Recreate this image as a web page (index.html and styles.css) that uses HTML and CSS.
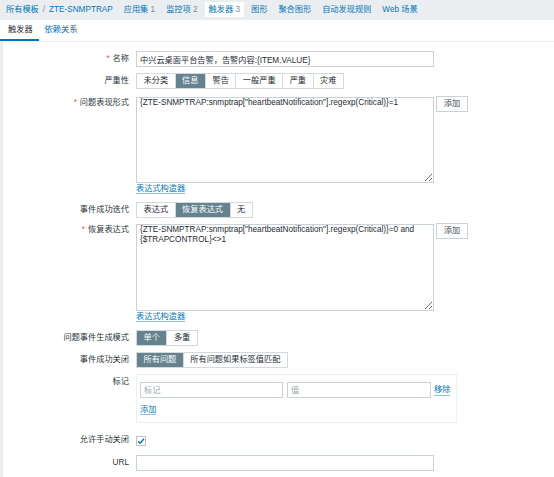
FILE: index.html
```html
<!DOCTYPE html>
<html lang="zh-CN">
<head>
  <meta charset="UTF-8" />
  <meta name="viewport" content="width=device-width, initial-scale=1.0"/>
  <title>触发器</title>
  <link rel="stylesheet" href="styles.css">
</head>
<body>

  <!-- Host navigation -->
  <ul class="host-nav">
    <li><a href="#">所有模板</a><span class="sep">/</span><a href="#">ZTE-SNMPTRAP</a></li>
    <li><a href="#">应用集</a> <span class="count">1</span></li>
    <li><a href="#">监控项</a> <span class="count">2</span></li>
    <li class="selected"><a href="#">触发器</a> <span class="count">3</span></li>
    <li><a href="#">图形</a></li>
    <li><a href="#">聚合图形</a></li>
    <li><a href="#">自动发现规则</a></li>
    <li><a href="#">Web 场景</a></li>
  </ul>

  <!-- Tabs -->
  <ul class="tabs">
    <li class="active">触发器</li>
    <li><a href="#">依赖关系</a></li>
  </ul>

  <div class="tab-body">

    <div class="row">
      <label class="req">名称</label>
      <input class="field" type="text" value="中兴云桌面平台告警，告警内容:{ITEM.VALUE}" />
    </div>

    <div class="row sev">
      <label>严重性</label>
      <div class="seg">
        <span>未分类</span>
        <span class="on">信息</span>
        <span>警告</span>
        <span>一般严重</span>
        <span>严重</span>
        <span>灾难</span>
      </div>
    </div>

    <div class="row gap7">
      <label class="req tall">问题表现形式</label>
      <div>
        <div class="with-btn">
          <textarea class="expr">{ZTE-SNMPTRAP:snmptrap["heartbeatNotification"].regexp(Critical)}=1</textarea>
          <button class="btn">添加</button>
        </div>
        <div class="link-line"><a href="#">表达式构造器</a></div>
      </div>
    </div>

    <div class="row">
      <label>事件成功迭代</label>
      <div class="seg">
        <span>表达式</span>
        <span class="on">恢复表达式</span>
        <span>无</span>
      </div>
    </div>

    <div class="row gap7">
      <label class="req tall">恢复表达式</label>
      <div>
        <div class="with-btn">
          <textarea class="expr recovery">{ZTE-SNMPTRAP:snmptrap["heartbeatNotification"].regexp(Critical)}=0 and {$TRAPCONTROL}&lt;&gt;1</textarea>
          <button class="btn">添加</button>
        </div>
        <div class="link-line"><a href="#">表达式构造器</a></div>
      </div>
    </div>

    <div class="row gap6">
      <label>问题事件生成模式</label>
      <div class="seg">
        <span class="on">单个</span>
        <span>多重</span>
      </div>
    </div>

    <div class="row gap6">
      <label>事件成功关闭</label>
      <div class="seg">
        <span class="on">所有问题</span>
        <span>所有问题如果标签值匹配</span>
      </div>
    </div>

    <div class="row gap11">
      <label>标记</label>
      <div class="tag-box">
        <div class="tag-row">
          <input class="tag-name" type="text" placeholder="标记" />
          <input class="tag-value" type="text" placeholder="值" />
          <a href="#">移除</a>
        </div>
        <div class="link-line add"><a href="#">添加</a></div>
      </div>
    </div>

    <div class="row gap9 check-row">
      <label>允许手动关闭</label>
      <span class="checkbox">
        <svg width="8" height="8" viewBox="0 0 8 8"><path d="M1 4.2 L3.1 6.2 L7 1.8" fill="none" stroke="#0275b8" stroke-width="1.4"/></svg>
      </span>
    </div>

    <div class="row">
      <label>URL</label>
      <input class="field" type="text" value="" />
    </div>

  </div>

</body>
</html>
```

FILE: styles.css
```css
body {
  margin: 0; background: #fff; color: #1f2c33;
  font-family: "Liberation Sans", Arial, "Noto Sans CJK SC", sans-serif;
  font-size: 8.2px;
}
a { color: #0275b8; text-decoration: none; }

/* top navigation */
.host-nav {
  list-style: none; margin: 0; padding: 2px 0 3px 2px;
  background: #ebeef0; display: flex; gap: 3px;
}
.host-nav li { padding: 0 4px; line-height: 15px; }
.host-nav .selected { background: #fff; }
.host-nav .count { color: #768d99; }
.host-nav .sep { color: #768d99; margin: 0 4px; }

/* tabs */
.tabs { list-style: none; margin: 0; padding: 0; display: flex; }
.tabs li { padding: 0 6px; line-height: 19px; border-bottom: 2px solid transparent; }
.tabs li:first-child { padding-left: 8px; }
.tabs .active { border-bottom-color: #0275b8; }

.tab-body {
  border-top: 1px solid #ebeef0; border-left: 3px solid #ebeef0;
  padding: 9px 0 20px 0;
}

/* form rows */
.row { display: flex; align-items: flex-start; margin-bottom: 6px; }
.row.sev { margin-bottom: 8px; }
.row.gap7 { margin-bottom: 7px; }
.row.gap6 { margin-bottom: 6px; }
.row.gap9 { margin-bottom: 9px; }
.row.gap11 { margin-bottom: 11px; }
.row > label {
  width: 126px; flex-shrink: 0; margin-right: 7px;
  text-align: right; line-height: 16px; color: #2b373d;
}
.row > label.tall { line-height: 12px; }
.row > label.req::before { content: "*"; color: #e45959; margin-right: 3px; }

.field, .tag-row input, textarea {
  box-sizing: border-box; height: 16px; padding: 0 3px;
  border: 1px solid #c9d2d6; background: #fff; color: #1f2c33;
  font: inherit; outline: none; margin: 0;
}
.field { width: 298px; }
::placeholder { color: #9ba9b0; }

textarea.expr {
  width: 298px; height: 86px; line-height: 10px; resize: vertical; display: block;
}
textarea.recovery { height: 87px; }
.with-btn { display: flex; align-items: flex-start; }
.btn {
  margin: -1px 0 0 2px; width: 32px; height: 16px; padding: 0;
  border: 1px solid #c9d2d6; background: #fff; color: #3d4a51;
  font: inherit; line-height: 14px;
}
.link-line { line-height: 12px; }
.link-line a { border-bottom: 1px solid #8fc0de; }

/* segmented radio */
.seg { display: inline-flex; border: 1px solid #d3dadd; }
.seg span { padding: 0 6.5px; line-height: 14px; border-left: 1px solid #d3dadd; }
.seg span:first-child { border-left: 0; }
.seg .on { background: #64838f; color: #fff; }

/* tags */
.tag-box {
  box-sizing: border-box; width: 321px; border: 1px solid #edf0f2;
  padding: 7px 3px 6px 3px;
}
.tag-row { display: flex; align-items: center; gap: 4px; }
.tag-row .tag-name { width: 143px; }
.tag-row .tag-value { width: 144px; }
.tag-row a { margin-left: -1px; line-height: 11px; border-bottom: 1px solid #8fc0de; }
.link-line.add { margin-top: 6px; }

/* checkbox */
.check-row > label { line-height: 12px; }
.checkbox {
  box-sizing: border-box; width: 10px; height: 10px; margin-top: 2px;
  border: 1px solid #b8c4ca; display: flex; align-items: center; justify-content: center;
}
.checkbox svg { display: block; }
```
